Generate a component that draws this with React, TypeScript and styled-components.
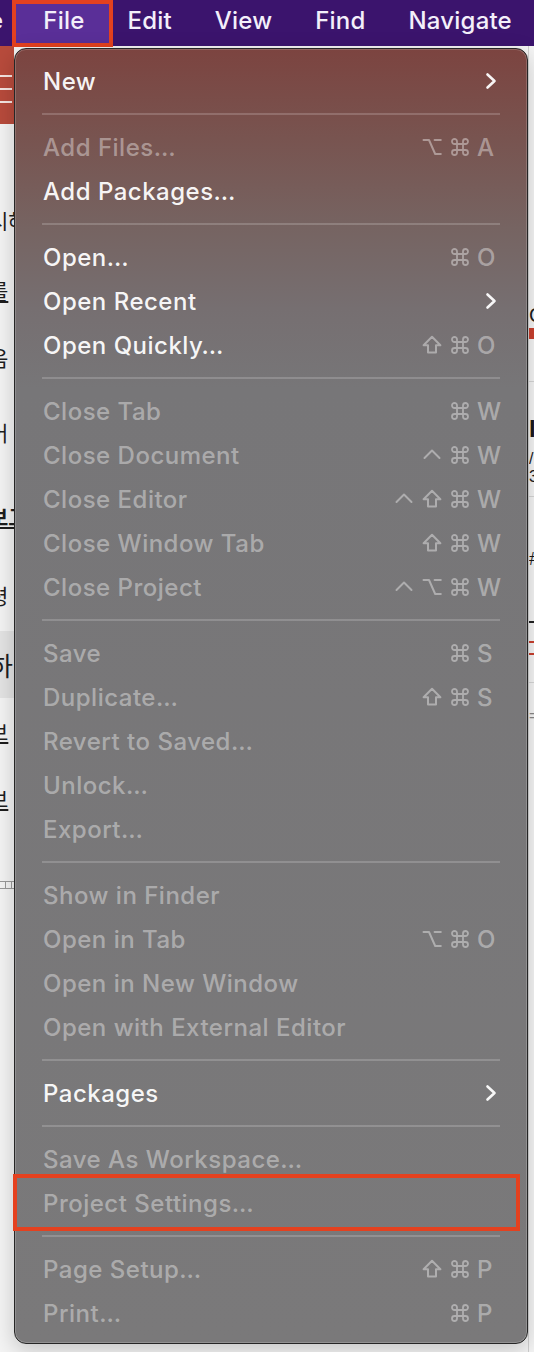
import React from "react";
import styled, { createGlobalStyle } from "styled-components";

const GlobalStyle = createGlobalStyle`
  html, body {
    margin: 0;
    padding: 0;
    background: #f1f1f1;
    overflow: hidden;
  }
  * { box-sizing: border-box; }
`;

const Screen = styled.div`
  position: relative;
  width: 534px;
  height: 1352px;
  overflow: hidden;
  background: #f2f2f2;
  font-family: Inter, "Noto Sans", sans-serif;
`;

const MenuBar = styled.div`
  height: 46px;
  background: #3b146d;
  display: flex;
  align-items: center;
  color: #f3effa;
  font-size: 24px;
  font-weight: 500;
  letter-spacing: 0.2px;
  white-space: nowrap;
`;

const Ghost = styled.span`
  margin-left: -11px;
  margin-right: 18.5px;
  padding-bottom: 5px;
`;

const MenuTitle = styled.span<{ $active?: boolean }>`
  position: relative;
  height: 46px;
  display: flex;
  align-items: center;
  padding: 0 21.5px 5px;
  & > b {
    position: relative;
    z-index: 1;
    font-weight: 500;
  }
  ${(p) =>
    p.$active &&
    `
    &::before {
      content: "";
      position: absolute;
      top: 0;
      bottom: -1px;
      left: -9.5px;
      right: -7px;
      background: #5a2f98;
      border: 4px solid #e4411f;
    }
  `}
`;

const Desktop = styled.div`
  display: flex;
  height: 1306px;
`;

const LeftPane = styled.div`
  width: 14px;
  overflow: hidden;
  display: flex;
  flex-direction: column;
  background: #f4f4f4;
`;

const Toolbar = styled.div`
  height: 78px;
  background: #b84b3c;
  display: flex;
  flex-direction: column;
  gap: 11px;
  padding-top: 29px;
`;

const HamburgerLine = styled.div`
  width: 12px;
  height: 2px;
  background: #f6e6e2;
`;

const Spacer = styled.div<{ $h: number }>`
  height: ${(p) => p.$h}px;
  flex-shrink: 0;
`;

const DocLine = styled.div<{ $h: number; $shade?: boolean; $bold?: boolean; $under?: boolean }>`
  height: ${(p) => p.$h}px;
  flex-shrink: 0;
  display: flex;
  align-items: center;
  background: ${(p) => (p.$shade ? "#e4e4e4" : "transparent")};
  font-family: "Noto Sans CJK KR", sans-serif;
  font-size: ${(p) => (p.$shade ? 26 : 21)}px;
  font-weight: ${(p) => (p.$bold ? 700 : 400)};
  color: #1e1e1e;
  white-space: nowrap;
  text-decoration: ${(p) => (p.$under ? "underline" : "none")};
  & > span {
    margin-left: -11px;
  }
`;

const Ruler = styled.div`
  margin-top: 50px;
  height: 8px;
  width: 14px;
  border-top: 1px solid #9a9a9a;
  border-bottom: 1px solid #9a9a9a;
  background: repeating-linear-gradient(90deg, transparent 0 5px, #9a9a9a 5px 6px);
`;

const Middle = styled.div`
  flex: 1;
  background: #f4f4f4;
`;

const RightPane = styled.div`
  width: 6px;
  overflow: hidden;
  display: flex;
  flex-direction: column;
  background: #f5f5f5;
  border-left: 1px solid #d0d0d0;
`;

const Glyph = styled.div<{ $mt: number; $color?: string; $size?: number; $bold?: boolean }>`
  margin-top: ${(p) => p.$mt}px;
  height: ${(p) => (p.$size ?? 20) + 2}px;
  font-family: "Liberation Sans", sans-serif;
  font-size: ${(p) => p.$size ?? 20}px;
  line-height: ${(p) => (p.$size ?? 20) + 2}px;
  font-weight: ${(p) => (p.$bold ? 700 : 400)};
  color: ${(p) => p.$color ?? "#1a1a1a"};
  white-space: nowrap;
`;

const Rule = styled.div<{ $mt: number; $color: string; $w?: number }>`
  margin-top: ${(p) => p.$mt}px;
  height: ${(p) => p.$w ?? 1}px;
  background: ${(p) => p.$color};
  flex-shrink: 0;
`;

const Menu = styled.div`
  position: absolute;
  top: 48px;
  left: 14px;
  width: 514px;
  border: 1px solid #262626;
  border-radius: 12px;
  padding: 10px 0 8px;
  background: linear-gradient(
    180deg,
    #7c4440 0px,
    #785450 90px,
    #766462 180px,
    #766f71 260px,
    #777678 340px,
    #7a797a 100%
  );
  box-shadow: inset 0 0 0 1px rgba(255, 255, 255, 0.18), 0 6px 22px rgba(0, 0, 0, 0.2);
  font-family: Inter, "Noto Sans", sans-serif;
`;

const Row = styled.div<{ $enabled?: boolean }>`
  position: relative;
  height: 44px;
  display: flex;
  align-items: center;
  padding: 0 28px 0 28px;
  font-size: 24px;
  letter-spacing: 0.5px;
  font-weight: 500;
  color: ${(p) => (p.$enabled ? "rgba(255,255,255,0.94)" : "rgba(255,255,255,0.4)")};
  white-space: nowrap;
`;

const Label = styled.span`
  flex: 1;
`;

const Shortcut = styled.span`
  display: flex;
  align-items: center;
  color: rgba(255, 255, 255, 0.4);
`;

const ModKey = styled.span`
  width: 28px;
  height: 24px;
  display: flex;
  align-items: center;
  justify-content: center;
  & > svg {
    width: 20px;
    height: 20px;
  }
`;

const KeyChar = styled.span`
  width: 22px;
  margin-left: 3px;
  text-align: left;
  letter-spacing: 0;
`;

const Chevron = styled.svg`
  width: 12px;
  height: 18px;
  margin-right: 2px;
`;

const Separator = styled.div`
  height: 22px;
  display: flex;
  align-items: center;
  padding: 0 27px;
  & > div {
    flex: 1;
    height: 2px;
    background: rgba(255, 255, 255, 0.18);
  }
`;

const Callout = styled.div`
  position: absolute;
  top: -7px;
  bottom: -6px;
  left: -2px;
  right: 7px;
  border: 4px solid #e4411f;
  pointer-events: none;
`;

type Mod = "cmd" | "opt" | "shift" | "ctrl";

const modPaths: Record<Mod, string> = {
  cmd: "M7 7 V4.5 A2.5 2.5 0 1 0 4.5 7 H15.5 A2.5 2.5 0 1 0 13 4.5 V15.5 A2.5 2.5 0 1 0 15.5 13 H4.5 A2.5 2.5 0 1 0 7 15.5 Z",
  shift: "M10 1.8 L18.4 10.2 H14 V17.6 H6 V10.2 H1.6 Z",
  opt: "M1.5 3 H7 L13.2 17 H18.8 M12.6 3 H18.8",
  ctrl: "M2.5 13 L10 5.5 L17.5 13",
};

const ModIcon = ({ m }: { m: Mod }) => (
  <svg viewBox="0 0 20 20">
    <path
      d={modPaths[m]}
      fill="none"
      stroke="rgba(255,255,255,0.4)"
      strokeWidth={m === "cmd" ? 1.8 : 2}
      strokeLinejoin="round"
      strokeLinecap="round"
    />
  </svg>
);

type Item =
  | { kind: "sep" }
  | {
      kind: "item";
      label: string;
      enabled?: boolean;
      mods?: Mod[];
      keyChar?: string;
      sub?: boolean;
      mark?: boolean;
    };

const items: Item[] = [
  { kind: "item", label: "New", enabled: true, sub: true },
  { kind: "sep" },
  { kind: "item", label: "Add Files…", mods: ["opt", "cmd"], keyChar: "A" },
  { kind: "item", label: "Add Packages…", enabled: true },
  { kind: "sep" },
  { kind: "item", label: "Open…", enabled: true, mods: ["cmd"], keyChar: "O" },
  { kind: "item", label: "Open Recent", enabled: true, sub: true },
  { kind: "item", label: "Open Quickly…", enabled: true, mods: ["shift", "cmd"], keyChar: "O" },
  { kind: "sep" },
  { kind: "item", label: "Close Tab", mods: ["cmd"], keyChar: "W" },
  { kind: "item", label: "Close Document", mods: ["ctrl", "cmd"], keyChar: "W" },
  { kind: "item", label: "Close Editor", mods: ["ctrl", "shift", "cmd"], keyChar: "W" },
  { kind: "item", label: "Close Window Tab", mods: ["shift", "cmd"], keyChar: "W" },
  { kind: "item", label: "Close Project", mods: ["ctrl", "opt", "cmd"], keyChar: "W" },
  { kind: "sep" },
  { kind: "item", label: "Save", mods: ["cmd"], keyChar: "S" },
  { kind: "item", label: "Duplicate…", mods: ["shift", "cmd"], keyChar: "S" },
  { kind: "item", label: "Revert to Saved…" },
  { kind: "item", label: "Unlock…" },
  { kind: "item", label: "Export…" },
  { kind: "sep" },
  { kind: "item", label: "Show in Finder" },
  { kind: "item", label: "Open in Tab", mods: ["opt", "cmd"], keyChar: "O" },
  { kind: "item", label: "Open in New Window" },
  { kind: "item", label: "Open with External Editor" },
  { kind: "sep" },
  { kind: "item", label: "Packages", enabled: true, sub: true },
  { kind: "sep" },
  { kind: "item", label: "Save As Workspace…" },
  { kind: "item", label: "Project Settings…", mark: true },
  { kind: "sep" },
  { kind: "item", label: "Page Setup…", mods: ["shift", "cmd"], keyChar: "P" },
  { kind: "item", label: "Print…", mods: ["cmd"], keyChar: "P" },
];

const docLines = [
  { h: 72, text: "시해" },
  { h: 68, text: "를", under: true },
  { h: 66, text: "음" },
  { h: 83, text: "어" },
  { h: 86, text: "보고", bold: true, under: true },
  { h: 72, text: "령" },
  { h: 67, text: "하", shade: true },
  { h: 66, text: "브", under: true },
  { h: 67, text: "보", under: true },
];

export default function App() {
  return (
    <Screen>
      <GlobalStyle />
      <MenuBar>
        <Ghost>e</Ghost>
        <MenuTitle $active>
          <b>File</b>
        </MenuTitle>
        <MenuTitle>
          <b>Edit</b>
        </MenuTitle>
        <MenuTitle>
          <b>View</b>
        </MenuTitle>
        <MenuTitle>
          <b>Find</b>
        </MenuTitle>
        <MenuTitle>
          <b>Navigate</b>
        </MenuTitle>
      </MenuBar>
      <Desktop>
        <LeftPane>
          <Toolbar>
            <HamburgerLine />
            <HamburgerLine />
            <HamburgerLine />
          </Toolbar>
          <Spacer $h={60} />
          {docLines.map((d, i) => (
            <DocLine key={i} $h={d.h} $shade={d.shade} $bold={d.bold} $under={d.under}>
              <span>{d.text}</span>
            </DocLine>
          ))}
          <Ruler />
        </LeftPane>
        <Middle />
        <RightPane>
          <Glyph $mt={258}>C</Glyph>
          <Rule $mt={2} $color="#c9402e" $w={11} />
          <Rule $mt={42} $color="#d6d6d6" />
          <Glyph $mt={34} $size={24} $bold>
            I
          </Glyph>
          <Glyph $mt={8} $size={16}>
            /
          </Glyph>
          <Glyph $mt={0} $size={16}>
            3
          </Glyph>
          <Rule $mt={10} $color="#d6d6d6" />
          <Glyph $mt={52} $size={18}>
            #
          </Glyph>
          <Rule $mt={52} $color="#222" $w={2} />
          <Rule $mt={18} $color="#c9402e" $w={2} />
          <Rule $mt={10} $color="#c9402e" $w={2} />
          <Rule $mt={27} $color="#d6d6d6" />
          <Glyph $mt={24} $size={16} $color="#888">
            =
          </Glyph>
        </RightPane>
      </Desktop>
      <Menu>
        {items.map((it, i) =>
          it.kind === "sep" ? (
            <Separator key={i}>
              <div />
            </Separator>
          ) : (
            <Row key={i} $enabled={it.enabled}>
              <Label>{it.label}</Label>
              {it.keyChar && (
                <Shortcut>
                  {it.mods?.map((m, j) => (
                    <ModKey key={j}>
                      <ModIcon m={m} />
                    </ModKey>
                  ))}
                  <KeyChar>{it.keyChar}</KeyChar>
                </Shortcut>
              )}
              {it.sub && (
                <Chevron viewBox="0 0 12 18">
                  <path
                    d="M2.5 2.5 L9.5 9 L2.5 15.5"
                    fill="none"
                    stroke="rgba(255,255,255,0.94)"
                    strokeWidth="2.6"
                    strokeLinecap="round"
                    strokeLinejoin="round"
                  />
                </Chevron>
              )}
              {it.mark && <Callout />}
            </Row>
          )
        )}
      </Menu>
    </Screen>
  );
}
